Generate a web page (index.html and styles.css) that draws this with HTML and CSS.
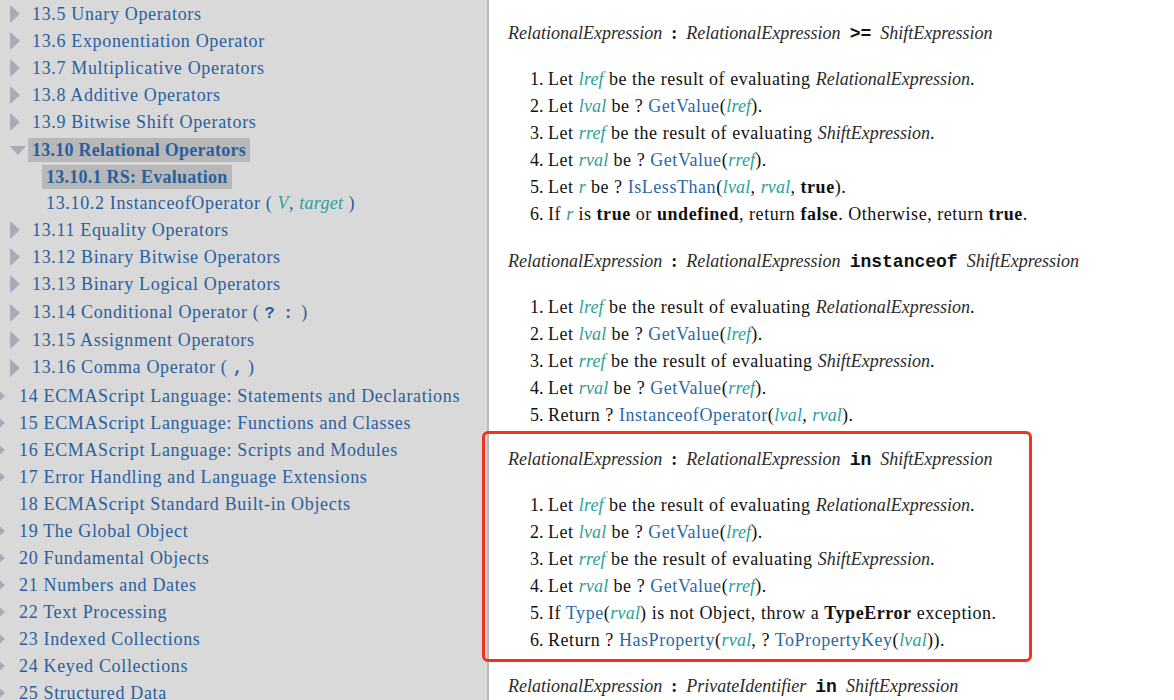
FILE: index.html
```html
<!DOCTYPE html>
<html>
<head>
<meta charset="utf-8">
<link rel="stylesheet" href="styles.css">
</head>
<body>
<div class="page">
  <nav class="sidebar">
    <ul class="toc">
      <li class="row l2"><span class="tog"></span><a href="#">13.5 Unary Operators</a></li>
      <li class="row l2"><span class="tog"></span><a href="#">13.6 Exponentiation Operator</a></li>
      <li class="row l2"><span class="tog"></span><a href="#">13.7 Multiplicative Operators</a></li>
      <li class="row l2"><span class="tog"></span><a href="#">13.8 Additive Operators</a></li>
      <li class="row l2"><span class="tog"></span><a href="#">13.9 Bitwise Shift Operators</a></li>
      <li class="row l2 active"><span class="tog open"></span><a href="#">13.10 Relational Operators</a></li>
      <li class="row l3 active"><a href="#">13.10.1 RS: Evaluation</a></li>
      <li class="row l3"><a href="#">13.10.2 InstanceofOperator ( <var class="v">V</var>, <var class="v">target</var> )</a></li>
      <li class="row l2"><span class="tog"></span><a href="#">13.11 Equality Operators</a></li>
      <li class="row l2"><span class="tog"></span><a href="#">13.12 Binary Bitwise Operators</a></li>
      <li class="row l2"><span class="tog"></span><a href="#">13.13 Binary Logical Operators</a></li>
      <li class="row l2 tall2"><span class="tog"></span><a href="#">13.14 Conditional Operator ( <code class="tc">?</code> <code class="tc sp">:</code> )</a></li>
      <li class="row l2"><span class="tog"></span><a href="#">13.15 Assignment Operators</a></li>
      <li class="row l2 tall1"><span class="tog"></span><a href="#">13.16 Comma Operator ( <code class="tc">,</code> )</a></li>
      <li class="row l1"><span class="tog"></span><a href="#">14 ECMAScript Language: Statements and Declarations</a></li>
      <li class="row l1"><span class="tog"></span><a href="#">15 ECMAScript Language: Functions and Classes</a></li>
      <li class="row l1"><span class="tog"></span><a href="#">16 ECMAScript Language: Scripts and Modules</a></li>
      <li class="row l1"><span class="tog"></span><a href="#">17 Error Handling and Language Extensions</a></li>
      <li class="row l1"><span class="tog none"></span><a href="#">18 ECMAScript Standard Built-in Objects</a></li>
      <li class="row l1"><span class="tog"></span><a href="#">19 The Global Object</a></li>
      <li class="row l1"><span class="tog"></span><a href="#">20 Fundamental Objects</a></li>
      <li class="row l1"><span class="tog"></span><a href="#">21 Numbers and Dates</a></li>
      <li class="row l1"><span class="tog"></span><a href="#">22 Text Processing</a></li>
      <li class="row l1"><span class="tog"></span><a href="#">23 Indexed Collections</a></li>
      <li class="row l1"><span class="tog"></span><a href="#">24 Keyed Collections</a></li>
      <li class="row l1"><span class="tog"></span><a href="#">25 Structured Data</a></li>
    </ul>
  </nav>
  <main class="content">
    <section class="alg">
      <div class="prod"><span class="nt">RelationalExpression</span><span class="geq">:</span><span class="nt">RelationalExpression</span><code class="t">&gt;=</code><span class="nt">ShiftExpression</span></div>
      <ol class="steps">
        <li>Let <var class="v">lref</var> be the result of evaluating <span class="nt">RelationalExpression</span>.</li>
        <li>Let <var class="v">lval</var> be ? <a class="op" href="#">GetValue</a>(<var class="v">lref</var>).</li>
        <li>Let <var class="v">rref</var> be the result of evaluating <span class="nt">ShiftExpression</span>.</li>
        <li>Let <var class="v">rval</var> be ? <a class="op" href="#">GetValue</a>(<var class="v">rref</var>).</li>
        <li>Let <var class="v">r</var> be ? <a class="op" href="#">IsLessThan</a>(<var class="v">lval</var>, <var class="v">rval</var>, <b>true</b>).</li>
        <li>If <var class="v">r</var> is <b>true</b> or <b>undefined</b>, return <b>false</b>. Otherwise, return <b>true</b>.</li>
      </ol>
    </section>
    <section class="alg">
      <div class="prod"><span class="nt">RelationalExpression</span><span class="geq">:</span><span class="nt">RelationalExpression</span><code class="t">instanceof</code><span class="nt">ShiftExpression</span></div>
      <ol class="steps">
        <li>Let <var class="v">lref</var> be the result of evaluating <span class="nt">RelationalExpression</span>.</li>
        <li>Let <var class="v">lval</var> be ? <a class="op" href="#">GetValue</a>(<var class="v">lref</var>).</li>
        <li>Let <var class="v">rref</var> be the result of evaluating <span class="nt">ShiftExpression</span>.</li>
        <li>Let <var class="v">rval</var> be ? <a class="op" href="#">GetValue</a>(<var class="v">rref</var>).</li>
        <li>Return ? <a class="op" href="#">InstanceofOperator</a>(<var class="v">lval</var>, <var class="v">rval</var>).</li>
      </ol>
    </section>
    <section class="alg hl">
      <div class="prod"><span class="nt">RelationalExpression</span><span class="geq">:</span><span class="nt">RelationalExpression</span><code class="t">in</code><span class="nt">ShiftExpression</span></div>
      <ol class="steps">
        <li>Let <var class="v">lref</var> be the result of evaluating <span class="nt">RelationalExpression</span>.</li>
        <li>Let <var class="v">lval</var> be ? <a class="op" href="#">GetValue</a>(<var class="v">lref</var>).</li>
        <li>Let <var class="v">rref</var> be the result of evaluating <span class="nt">ShiftExpression</span>.</li>
        <li>Let <var class="v">rval</var> be ? <a class="op" href="#">GetValue</a>(<var class="v">rref</var>).</li>
        <li>If <a class="op" href="#">Type</a>(<var class="v">rval</var>) is not Object, throw a <b>TypeError</b> exception.</li>
        <li>Return ? <a class="op" href="#">HasProperty</a>(<var class="v">rval</var>, ? <a class="op" href="#">ToPropertyKey</a>(<var class="v">lval</var>)).</li>
      </ol>
    </section>
    <section class="alg after-hl">
      <div class="prod"><span class="nt">RelationalExpression</span><span class="geq">:</span><span class="nt">PrivateIdentifier</span><code class="t">in</code><span class="nt">ShiftExpression</span></div>
    </section>
  </main>
</div>
</body>
</html>
```
FILE: styles.css
```css
html, body {
  margin: 0;
  padding: 0;
  background: #fff;
}
body {
  font-family: "Liberation Serif", serif;
  font-size: 18px;
  color: #111;
}
.page {
  display: flex;
  height: 700px;
  overflow: hidden;
}
.sidebar {
  width: 487px;
  flex: none;
  background: #d9d9d9;
  border-right: 2px solid #b9b9b9;
  overflow: hidden;
}
.toc {
  list-style: none;
  margin: 0;
  padding: 0.5px 0 0;
}
.row {
  display: flex;
  align-items: center;
  height: 27px;
  white-space: nowrap;
}
.row.tall2 { margin-top: 2px; }
.row.tall1 { margin-top: 1px; margin-bottom: 1px; }
.l1 .tog { margin-left: -5px; width: 20px; }
.l2 { padding-left: 10px; }
.l2 .tog { width: 18px; }
.l3 { padding-left: 42px; }
.tog {
  flex: none;
  display: flex;
  align-items: center;
  height: 27px;
}
.tog::before {
  content: "";
  width: 0;
  height: 0;
  border-left: 10px solid #aaaab9;
  border-top: 9px solid transparent;
  border-bottom: 9px solid transparent;
}
.tog.open::before {
  border-left: 8px solid transparent;
  border-right: 8px solid transparent;
  border-top: 9px solid #aaaab9;
  border-bottom: 0;
  margin-top: 2px;
}
.tog.none::before { display: none; }
.row a {
  color: #2a5f9e;
  text-decoration: none;
  padding: 0 4px;
  line-height: 24px;
  letter-spacing: 0.66px;
}
.row.active a {
  background: #b8b8b8;
  font-weight: bold;
  margin-top: 2px;
  letter-spacing: 0.25px;
}
.row .v { letter-spacing: 0.3px; }
.tc {
  font-family: "Liberation Mono", monospace;
  font-weight: bold;
  font-size: 17px;
  letter-spacing: 0;
}
.tc.sp { margin: 0 3px; }
.v {
  font-style: italic;
  color: #2aa198;
}
.content {
  flex: 1;
  min-width: 0;
  padding: 19.5px 0 0 19px;
}
.alg + .alg { margin-top: 20px; }
.alg.hl { margin-top: 2.5px; }
.alg.after-hl { margin-top: 10.5px; }
.prod {
  line-height: 27px;
  white-space: nowrap;
  margin-bottom: 18px;
}
.nt {
  font-style: italic;
  color: #2b2b2b;
  letter-spacing: 0;
}
.geq {
  font-weight: bold;
  margin: 0 9px;
}
.t {
  font-family: "Liberation Mono", monospace;
  font-weight: bold;
  font-size: 18px;
  margin: 0 9px;
  color: #111;
  letter-spacing: 0;
}
.steps {
  margin: 0;
  padding-left: 40px;
}
.steps li {
  line-height: 27px;
  height: 27px;
  white-space: nowrap;
  letter-spacing: 0.55px;
}
.steps .v { letter-spacing: 0.2px; }
.steps li::marker { letter-spacing: 0; }
a.op {
  color: #2a68a8;
  text-decoration: none;
}
.hl {
  width: 550px;
  box-sizing: border-box;
  border: 3px solid #f3321e;
  border-radius: 6px;
  margin-left: -26px;
  padding: 11.5px 0 5.5px 23px;
}
```
